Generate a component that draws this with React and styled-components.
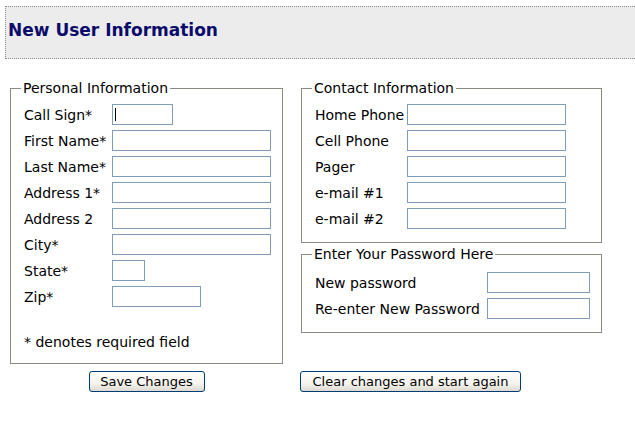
import React from "react";
import styled, { createGlobalStyle } from "styled-components";

const GlobalStyle = createGlobalStyle`
  html, body {
    margin: 0;
    overflow: hidden;
    background: #fff;
  }
  body {
    font-family: "DejaVu Sans", Verdana, sans-serif;
    font-size: 14px;
    color: #000;
  }
`;

const Header = styled.div`
  margin: 6px -20px 0 5px;
  height: 51px;
  background: #ececec;
  border: 1px dotted #8c8c8c;
  display: flex;
  align-items: center;
`;

const Title = styled.h1`
  margin: 0 0 6px 2px;
  font-size: 17px;
  font-weight: bold;
  color: #0b0b6b;
`;

const Layout = styled.div`
  display: grid;
  grid-template-columns: 273px 301px;
  column-gap: 18px;
  row-gap: 7px;
  align-items: start;
  padding: 21px 0 0 10px;
`;

const Column = styled.div`
  display: flex;
  flex-direction: column;
  gap: 3px;
`;

const FieldSet = styled.fieldset`
  margin: 0;
  padding: ${(props) => props.padTop || 8}px 11px 13px 13px;
  border: 1px solid #8a8a82;
  display: flex;
  flex-direction: column;
  gap: 5px;
`;

const Legend = styled.legend`
  padding: 0 2px;
  margin-left: -3px;
  line-height: 16px;
`;

const Row = styled.div`
  display: grid;
  grid-template-columns: ${(props) => props.labelWidth}px auto;
  align-items: center;
`;

const Label = styled.label`
  white-space: nowrap;
  line-height: 16px;
`;

const InputWrap = styled.span`
  position: relative;
  display: inline-block;
  width: ${(props) => props.w}px;
  height: 21px;
`;

const Input = styled.input`
  box-sizing: border-box;
  width: 100%;
  height: 21px;
  margin: 0;
  padding: 1px 2px;
  border: 1px solid #7f9db9;
  background: #fff;
  font: inherit;
  outline: none;
`;

const Caret = styled.span`
  position: absolute;
  left: 3px;
  top: 4px;
  width: 1px;
  height: 13px;
  background: #000;
`;

const Note = styled.div`
  margin-top: 22px;
  line-height: 16px;
`;

const ButtonCell = styled.div`
  display: flex;
  justify-content: ${(props) => (props.center ? "center" : "flex-start")};
  margin-left: ${(props) => (props.center ? "0" : "-1px")};
`;

const Button = styled.button`
  box-sizing: border-box;
  height: 21px;
  width: ${(props) => props.w}px;
  padding: 0;
  border: 1px solid #003c74;
  border-radius: 3px;
  background: linear-gradient(#ffffff 0%, #f5f4ef 60%, #dcdad0 100%);
  font-family: inherit;
  font-size: 13px;
  line-height: 16px;
  color: #000;
  cursor: pointer;
`;

const personal = [
  { label: "Call Sign*", w: 61, caret: true },
  { label: "First Name*", w: 159 },
  { label: "Last Name*", w: 159 },
  { label: "Address 1*", w: 159 },
  { label: "Address 2", w: 159 },
  { label: "City*", w: 159 },
  { label: "State*", w: 33 },
  { label: "Zip*", w: 89 },
];

const contact = ["Home Phone", "Cell Phone", "Pager", "e-mail #1", "e-mail #2"];

const passwords = ["New password", "Re-enter New Password"];

const Field = ({ w, caret, type }) => (
  <InputWrap w={w}>
    <Input type={type || "text"} />
    {caret && <Caret />}
  </InputWrap>
);

const App = () => (
  <>
    <GlobalStyle />
    <Header>
      <Title>New User Information</Title>
    </Header>
    <Layout>
      <FieldSet>
        <Legend>Personal Information</Legend>
        {personal.map((f) => (
          <Row key={f.label} labelWidth={88}>
            <Label>{f.label}</Label>
            <Field w={f.w} caret={f.caret} />
          </Row>
        ))}
        <Note>* denotes required field</Note>
      </FieldSet>
      <Column>
        <FieldSet>
          <Legend>Contact Information</Legend>
          {contact.map((l) => (
            <Row key={l} labelWidth={92}>
              <Label>{l}</Label>
              <Field w={159} />
            </Row>
          ))}
        </FieldSet>
        <FieldSet padTop={10}>
          <Legend>Enter Your Password Here</Legend>
          {passwords.map((l) => (
            <Row key={l} labelWidth={172}>
              <Label>{l}</Label>
              <Field w={103} type="password" />
            </Row>
          ))}
        </FieldSet>
      </Column>
      <ButtonCell center>
        <Button w={116}>Save Changes</Button>
      </ButtonCell>
      <ButtonCell>
        <Button w={221}>Clear changes and start again</Button>
      </ButtonCell>
    </Layout>
  </>
);

export default App;
